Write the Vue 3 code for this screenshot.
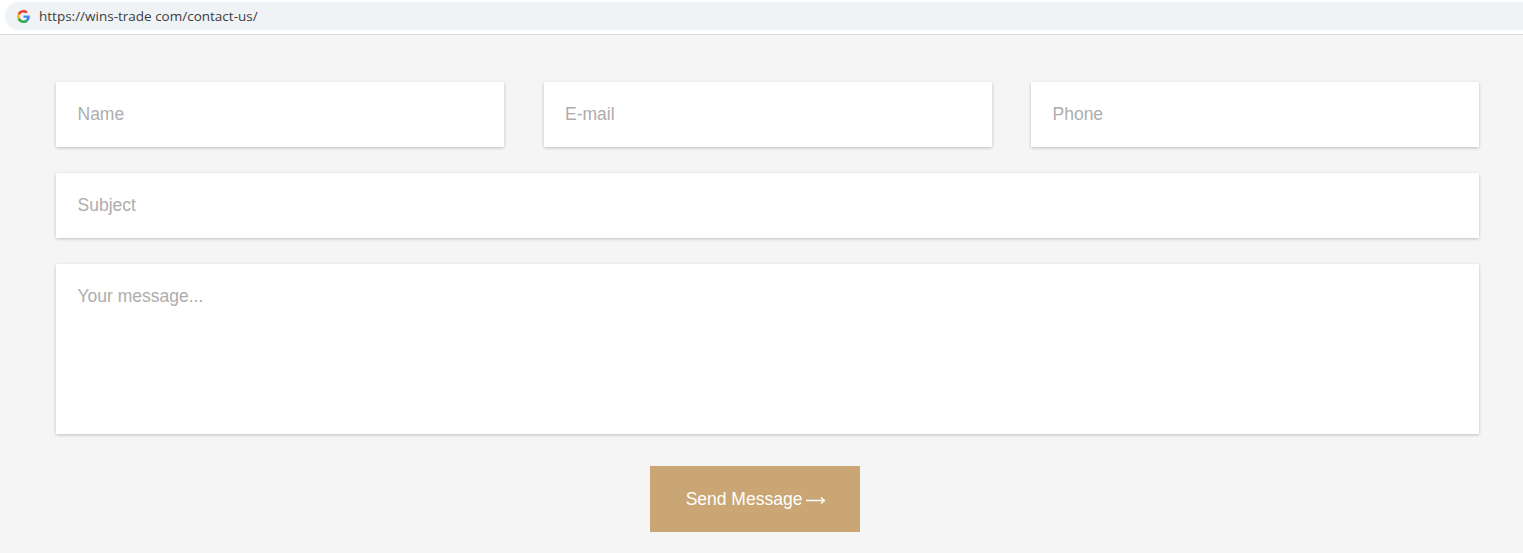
<script setup>
const topFields = ['Name', 'E-mail', 'Phone'];
</script>

<template>
  <div class="page">
    <div class="browser-bar">
      <div class="url-box">
        <svg class="g-logo" width="13" height="13" viewBox="0 0 48 48">
          <path fill="#EA4335" d="M24 9.5c3.500 0 6.700 1.200 9.200 3.600l6.900-6.900C35.900 2.400 30.500 0 24 0 14.600 0 6.500 5.400 2.600 13.200l8 6.200C12.500 13.600 17.800 9.500 24 9.500z"/>
          <path fill="#4285F4" d="M47 24.500c0-1.600-.1-3.100-.4-4.500H24v9h12.900c-.6 3-2.200 5.500-4.700 7.200l7.700 6C44.400 38 47 31.900 47 24.500z"/>
          <path fill="#FBBC05" d="M10.600 28.600c-.5-1.400-.8-3-.8-4.600s.3-3.200.8-4.600l-8-6.200C.9 16.500 0 20.100 0 24s.9 7.500 2.600 10.800l8-6.200z"/>
          <path fill="#34A853" d="M24 48c6.500 0 11.900-2.100 15.900-5.800l-7.700-6c-2.200 1.400-4.900 2.300-8.200 2.300-6.200 0-11.500-4.100-13.400-9.900l-8 6.200C6.500 42.600 14.600 48 24 48z"/>
        </svg>
        <span class="url">https://wins-trade com/contact-us/</span>
      </div>
    </div>

    <form class="contact-form" @submit.prevent>
      <div class="row-three">
        <input v-for="field in topFields" :key="field" class="field" type="text" :placeholder="field" />
      </div>
      <input class="field" type="text" placeholder="Subject" />
      <textarea class="field message" placeholder="Your message..."></textarea>
      <div class="actions">
        <button class="send-btn" type="submit">
          Send Message
          <svg class="arrow" width="19" height="9" viewBox="0 0 19 9">
            <path d="M0 4.500H18.500M15 1.500L18.500 4.500L15 7.500" fill="none" stroke="#fff" stroke-width="1.300"/>
          </svg>
        </button>
      </div>
    </form>
  </div>
</template>

<style>
html,
body {
  margin: 0;
  background: #f5f5f5;
}
</style>

<style scoped>
.page {
  width: 1523px;
  height: 553px;
  overflow: hidden;
  background: #f5f5f5;
  font-family: "Liberation Sans", Arial, sans-serif;
}

.browser-bar {
  height: 35px;
  padding: 2px 0 0 5px;
  box-sizing: border-box;
  background: #fff;
  border-bottom: 1px solid #dcdcdc;
}

.url-box {
  height: 28px;
  display: flex;
  align-items: center;
  padding-left: 12px;
  background: #f0f3f6;
  border-radius: 14px 0 0 14px;
}

.g-logo {
  flex: none;
}

.url {
  margin-left: 9px;
  font-family: "Open Sans", sans-serif;
  font-size: 13.500px;
  color: #3c3c3c;
}

.contact-form {
  display: flex;
  flex-direction: column;
  gap: 26px;
  padding: 47px 44px 0 56px;
}

.row-three {
  display: flex;
  gap: 39.500px;
}

.field {
  display: block;
  box-sizing: border-box;
  width: 100%;
  height: 65px;
  padding: 0 22px 0 21.500px;
  border: none;
  border-radius: 0;
  outline: none;
  background: #fff;
  box-shadow: 0 1px 3px rgba(0, 0, 0, 0.22);
  font-family: inherit;
  font-size: 17.500px;
  color: #333;
}

.row-three .field {
  flex: 1 1 0;
  min-width: 0;
}

.field::placeholder {
  color: #adadad;
  opacity: 1;
}

.message {
  height: 170px;
  padding-top: 22px;
  resize: none;
}

.actions {
  display: flex;
  justify-content: center;
  padding: 6px 25px 0 0;
}

.send-btn {
  display: flex;
  align-items: center;
  justify-content: center;
  gap: 4px;
  width: 210px;
  height: 66px;
  padding: 0 0 0 1px;
  border: none;
  background: #c9a673;
  color: #fff;
  font-family: inherit;
  font-size: 17.500px;
  cursor: pointer;
}

.arrow {
  flex: none;
  margin-top: 2px;
}
</style>
